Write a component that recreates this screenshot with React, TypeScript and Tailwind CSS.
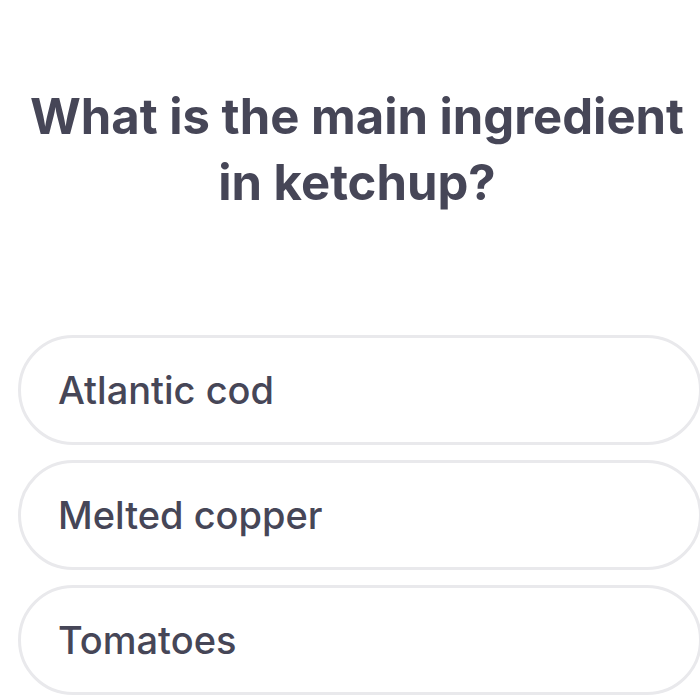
import React from "react";

const options = ["Atlantic cod", "Melted copper", "Tomatoes"];

export default function App() {
  return (
    <div
      className="w-[700px] h-[700px] bg-white overflow-hidden text-[#464657]"
      style={{ fontFamily: "Inter, 'Noto Sans', sans-serif" }}
    >
      <h1 className="pt-[84px] pl-[14px] text-center text-[49px] leading-[66px] font-bold whitespace-nowrap">
        What is the main ingredient
        <br />
        in ketchup?
      </h1>
      <div className="mt-[119px] pl-[18px] flex flex-col gap-[15px]">
        {options.map((o) => (
          <div
            key={o}
            className="w-[684px] h-[110px] shrink-0 rounded-full border-[3px] border-[#e9e9ec] flex items-center pl-[37px] text-[38px] font-medium"
          >
            {o}
          </div>
        ))}
      </div>
    </div>
  );
}
